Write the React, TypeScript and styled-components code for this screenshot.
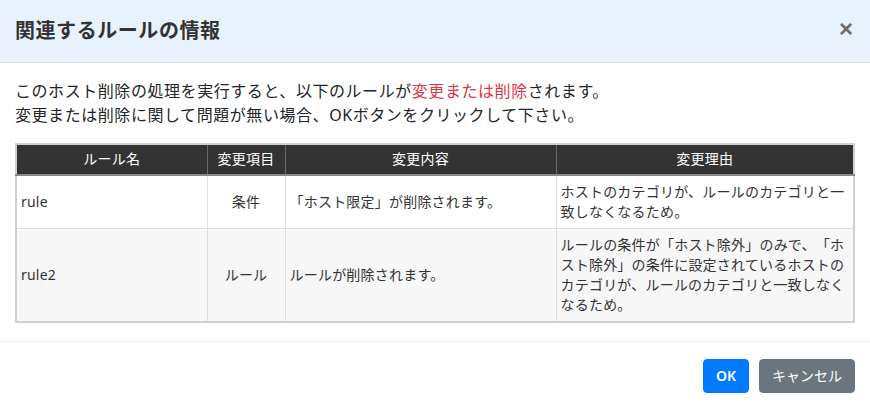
import React from 'react';
import styled, { createGlobalStyle } from 'styled-components';

const GlobalStyle = createGlobalStyle`
  html, body {
    margin: 0;
    padding: 0;
    background: #ffffff;
  }
  body {
    font-family: "Noto Sans", "Noto Sans CJK JP", sans-serif;
    color: #212529;
    letter-spacing: 0.035em;
    text-spacing-trim: space-all;
  }
`;

interface RuleChange {
  name: string;
  item: string;
  content: string;
  reason: string;
}

const changes: RuleChange[] = [
  {
    name: 'rule',
    item: '条件',
    content: '「ホスト限定」が削除されます。',
    reason: 'ホストのカテゴリが、ルールのカテゴリと一致しなくなるため。',
  },
  {
    name: 'rule2',
    item: 'ルール',
    content: 'ルールが削除されます。',
    reason:
      'ルールの条件が「ホスト除外」のみで、「ホスト除外」の条件に設定されているホストのカテゴリが、ルールのカテゴリと一致しなくなるため。',
  },
];

const App: React.FC = () => {
  return (
    <>
      <GlobalStyle />
      <Modal>
        <Header>
          <Title>関連するルールの情報</Title>
          <CloseButton aria-label="close">×</CloseButton>
        </Header>

        <Body>
          <Message>
            このホスト削除の処理を実行すると、以下のルールが<Warn>変更または削除</Warn>されます。
            <br />
            変更または削除に関して問題が無い場合、OKボタンをクリックして下さい。
          </Message>

          <Table>
            <colgroup>
              <col style={{ width: 191 }} />
              <col style={{ width: 78 }} />
              <col style={{ width: 271 }} />
              <col />
            </colgroup>
            <thead>
              <tr>
                <Th>ルール名</Th>
                <Th>変更項目</Th>
                <Th>変更内容</Th>
                <Th>変更理由</Th>
              </tr>
            </thead>
            <tbody>
              {changes.map((c, i) => (
                <Row key={c.name} $striped={i % 2 === 1}>
                  <Td>{c.name}</Td>
                  <Td $center>{c.item}</Td>
                  <Td>{c.content}</Td>
                  <Td>{c.reason}</Td>
                </Row>
              ))}
            </tbody>
          </Table>
        </Body>

        <Footer>
          <Button $variant="primary">OK</Button>
          <Button $variant="secondary">キャンセル</Button>
        </Footer>
      </Modal>
    </>
  );
};

const Modal = styled.div`
  width: 870px;
  background: #ffffff;
`;

const Header = styled.div`
  display: flex;
  align-items: center;
  justify-content: space-between;
  padding: 16px 15px 16px 15px;
  background: #e8f2fd;
  border-bottom: 1px solid #dee2e6;
`;

const Title = styled.h5`
  margin: 0;
  font-size: 20px;
  line-height: 30px;
  font-weight: 700;
  color: #333333;
`;

const CloseButton = styled.button`
  border: none;
  background: none;
  padding: 0;
  margin: -4px 2px 0 0;
  font-family: "Liberation Sans", Arial, sans-serif;
  font-size: 24px;
  font-weight: 700;
  line-height: 1;
  color: #6c6c6c;
  cursor: pointer;
`;

const Body = styled.div`
  padding: 16px 15px 18px 15px;
`;

const Message = styled.p`
  margin: 0 0 16px 0;
  font-size: 16px;
  line-height: 24px;
`;

const Warn = styled.span`
  color: #dc3545;
`;

const Table = styled.table`
  width: 100%;
  border-collapse: collapse;
  table-layout: fixed;
  border: 2px solid #d0d0d0;
  font-size: 14px;
  line-height: 20px;
  letter-spacing: 0.015em;
`;

const Th = styled.th`
  padding: 4px 4px 5px;
  background: #333333;
  color: #ffffff;
  font-weight: 400;
  text-align: center;
  border-left: 1px solid #6a6a6a;
  border-bottom: 2px solid #888888;

  &:first-child {
    border-left: none;
  }
`;

const Row = styled.tr<{ $striped?: boolean }>`
  background: ${(p) => (p.$striped ? '#f7f7f7' : '#ffffff')};
`;

const Td = styled.td<{ $center?: boolean }>`
  padding: 6px 4px;
  border: 1px solid #dddddd;
  text-align: ${(p) => (p.$center ? 'center' : 'left')};
  vertical-align: middle;
  color: #333333;
`;

const Footer = styled.div`
  display: flex;
  justify-content: flex-end;
  gap: 10px;
  padding: 17px 15px 16px 15px;
  border-top: 1px solid #e9ecef;
`;

const Button = styled.button<{ $variant: 'primary' | 'secondary' }>`
  padding: 6px 12px;
  font-family: "Noto Sans", "Noto Sans CJK JP", sans-serif;
  font-size: 14px;
  line-height: 20px;
  letter-spacing: 0;
  font-weight: ${(p) => (p.$variant === 'primary' ? 600 : 400)};
  color: #ffffff;
  border: 1px solid ${(p) => (p.$variant === 'primary' ? '#007bff' : '#6c757d')};
  background: ${(p) => (p.$variant === 'primary' ? '#007bff' : '#6c757d')};
  border-radius: 4px;
  cursor: pointer;
`;

export default App;
